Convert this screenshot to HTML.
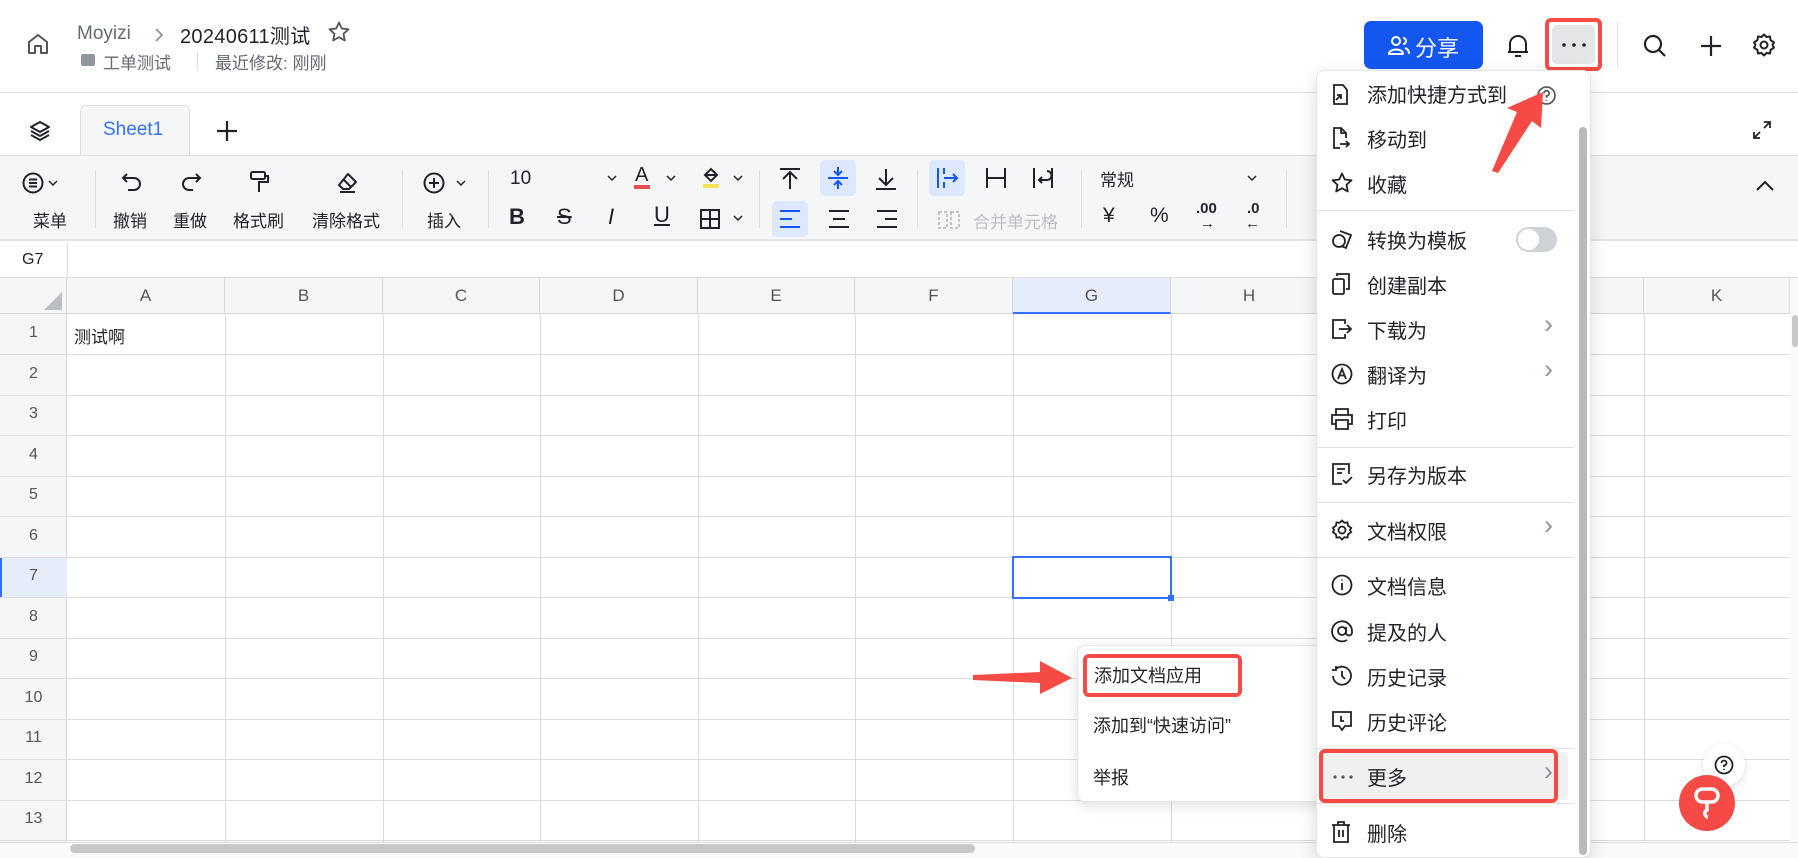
<!DOCTYPE html>
<html><head><meta charset="utf-8"><style>
*{margin:0;padding:0;box-sizing:border-box}
body{width:1798px;height:858px;overflow:hidden;background:#fff;font-family:"Liberation Sans","Noto Sans CJK SC",sans-serif;color:#1f2329;position:relative}
.a{position:absolute}
.t{position:absolute;white-space:nowrap}
svg{position:absolute;overflow:visible}
.lbl{font-size:17px;color:#1f2329}
.vl{position:absolute;top:314px;width:1px;height:530px;background:#dcdcdc}
.hl{position:absolute;left:0;width:1798px;height:1px;background:#dcdcdc}
.ch{position:absolute;top:278px;height:36px;line-height:36px;text-align:center;font-size:17px;color:#555;border-right:1px solid #d6d6d6}
.rh{position:absolute;left:0;width:67px;text-align:center;font-size:16px;color:#555}
.mi{position:absolute;left:1367px;font-size:20px;color:#1f2329;white-space:nowrap;margin-top:-2px}
.md{position:absolute;left:1316px;width:258px;height:1px;background:#dee0e3}
.chev{position:absolute;left:1544px;font-size:27px;color:#8f959e;margin-top:-5px}
.ic{left:1331px}
</style></head><body>

<!-- header -->
<svg style="left:26px;top:32px" width="24" height="24" viewBox="0 0 24 24" fill="none" stroke="#555" stroke-width="2"><path d="M3 10 L12 3 L21 10 V21 H15 V14 H9 V21 H3 Z" stroke-linejoin="round"/></svg>
<div class="t" style="left:77px;top:23px;font-size:19px;color:#646a73">Moyizi</div>
<svg style="left:154px;top:27px" width="10" height="16" viewBox="0 0 10 16" fill="none" stroke="#8f959e" stroke-width="1.8"><path d="M2 2 L8 8 L2 14"/></svg>
<div class="t" style="left:180px;top:20px;font-size:20px;color:#1f2329;letter-spacing:0.3px">20240611测试</div>
<svg style="left:328px;top:21px" width="22" height="22" viewBox="0 0 22 22" fill="none" stroke="#555" stroke-width="1.8" stroke-linejoin="round"><path d="M11 1.5 L13.8 7.5 L20.5 8.3 L15.5 12.8 L16.8 19.5 L11 16.2 L5.2 19.5 L6.5 12.8 L1.5 8.3 L8.2 7.5 Z"/></svg>
<div class="a" style="left:81px;top:54px;width:14px;height:12px;background:#8f959e;border-radius:2px"></div>
<div class="t" style="left:103px;top:49px;font-size:17px;color:#646a73">工单测试</div>
<div class="a" style="left:197px;top:52px;width:1px;height:18px;background:#dee0e3"></div>
<div class="t" style="left:215px;top:49px;font-size:17px;color:#646a73">最近修改: 刚刚</div>

<div class="a" style="left:1364px;top:21px;width:119px;height:48px;background:#1456f0;border-radius:7px"></div>
<svg style="left:1388px;top:35px" width="22" height="20" viewBox="0 0 22 20" fill="none" stroke="#fff" stroke-width="2"><circle cx="8" cy="6" r="4"/><path d="M1 19 C1 13 15 13 15 19 Z"/><path d="M15 3 A3 3 0 0 1 15 9 M17 13 C20 14 21 16 21 19"/></svg>
<div class="t" style="left:1415px;top:31px;font-size:22px;color:#fff">分享</div>
<svg style="left:1506px;top:33px" width="24" height="26" viewBox="0 0 24 26" fill="none" stroke="#1f2329" stroke-width="2"><path d="M4 19 V11 A8 8 0 0 1 20 11 V19 Z M2 19 H22 M9 23 H15" stroke-linejoin="round"/></svg>
<div class="a" style="left:1545px;top:18px;width:57px;height:53px;border:4px solid #f54a45;border-radius:6px"></div>
<div class="a" style="left:1552px;top:25px;width:43px;height:39px;background:#e4e5e7;border-radius:5px"></div>
<svg style="left:1562px;top:43px" width="24" height="4" viewBox="0 0 24 4" fill="#1f2329"><circle cx="2" cy="2" r="1.8"/><circle cx="12" cy="2" r="1.8"/><circle cx="22" cy="2" r="1.8"/></svg>
<div class="a" style="left:1617px;top:22px;width:1px;height:46px;background:#dee0e3"></div>
<svg style="left:1643px;top:34px" width="24" height="24" viewBox="0 0 24 24" fill="none" stroke="#1f2329" stroke-width="2.2"><circle cx="10" cy="10" r="8"/><path d="M16 16 L22 22"/></svg>
<svg style="left:1699px;top:34px" width="24" height="24" viewBox="0 0 24 24" fill="none" stroke="#1f2329" stroke-width="2.2"><path d="M12 2 V22 M2 12 H22"/></svg>
<svg style="left:1752px;top:33px" width="24" height="24" viewBox="0 0 24 24" fill="none" stroke="#1f2329" stroke-width="2"><circle cx="12" cy="12" r="3.5"/><path d="M12 1.5 L14.5 4 L18 3.5 L18.5 7 L22 9.5 L20.5 12 L22 14.5 L18.5 17 L18 20.5 L14.5 20 L12 22.5 L9.5 20 L6 20.5 L5.5 17 L2 14.5 L3.5 12 L2 9.5 L5.5 7 L6 3.5 L9.5 4 Z" stroke-linejoin="round"/></svg>

<div class="a" style="left:0;top:92px;width:1798px;height:1px;background:#dee0e3"></div>

<!-- tabs -->
<svg style="left:28px;top:119px" width="24" height="24" viewBox="0 0 24 24" fill="none" stroke="#1f2329" stroke-width="2" stroke-linejoin="round"><path d="M12 3 L21 8 L12 13 L3 8 Z M3 12 L12 17 L21 12 M3 16 L12 21 L21 16"/></svg>
<div class="a" style="left:80px;top:105px;width:110px;height:51px;background:#f5f6f7;border:1px solid #dee0e3;border-bottom:none;border-radius:6px 6px 0 0"></div>
<div class="t" style="left:103px;top:119px;font-size:19px;color:#3370ff">Sheet1</div>
<svg style="left:216px;top:120px" width="22" height="22" viewBox="0 0 22 22" fill="none" stroke="#1f2329" stroke-width="2.2"><path d="M11 1 V21 M1 11 H21"/></svg>
<svg style="left:1752px;top:120px" width="20" height="20" viewBox="0 0 20 20" fill="none" stroke="#1f2329" stroke-width="1.8"><path d="M12 2 H18 V8 M18 2 L12 8 M8 18 H2 V12 M2 18 L8 12"/></svg>

<!-- toolbar -->
<div class="a" style="left:0;top:155px;width:1798px;height:86px;background:#f5f6f7;border-top:1px solid #dee0e3;border-bottom:2px solid #e4e5e7"></div>
<svg style="left:22px;top:172px" width="22" height="22" viewBox="0 0 22 22" fill="none" stroke="#1f2329" stroke-width="2"><circle cx="11" cy="11" r="9.5"/><path d="M7 7.5 H15 M7 11 H15 M7 14.5 H15"/></svg>
<svg style="left:48px;top:180px" width="10" height="6" viewBox="0 0 10 6" fill="none" stroke="#1f2329" stroke-width="1.5"><path d="M1 1 L5 5 L9 1"/></svg>
<div class="t lbl" style="left:33px;top:207px">菜单</div>
<div class="a" style="left:95px;top:170px;width:1px;height:58px;background:#dee0e3"></div>
<svg style="left:121px;top:172px" width="22" height="22" viewBox="0 0 22 22" fill="none" stroke="#1f2329" stroke-width="2"><path d="M6 2 L2 6 L6 10 M2 6 H13 A6 6 0 0 1 13 18 H7"/></svg>
<div class="t lbl" style="left:113px;top:207px">撤销</div>
<svg style="left:180px;top:172px" width="22" height="22" viewBox="0 0 22 22" fill="none" stroke="#1f2329" stroke-width="2"><path d="M16 2 L20 6 L16 10 M20 6 H9 A6 6 0 0 0 9 18 H13"/></svg>
<div class="t lbl" style="left:173px;top:207px">重做</div>
<svg style="left:249px;top:170px" width="22" height="24" viewBox="0 0 22 24" fill="none" stroke="#1f2329" stroke-width="2"><rect x="2" y="2" width="14" height="7" rx="1.5"/><path d="M16 6 H19 V12 H10 V22"/></svg>
<div class="t lbl" style="left:233px;top:207px">格式刷</div>
<svg style="left:336px;top:172px" width="22" height="22" viewBox="0 0 22 22" fill="none" stroke="#1f2329" stroke-width="2" stroke-linejoin="round"><path d="M12 2 L20 10 L13 17 H7 L3 13 Z M7 7 L15 15 M4 20 H19"/></svg>
<div class="t lbl" style="left:312px;top:207px">清除格式</div>
<div class="a" style="left:402px;top:170px;width:1px;height:58px;background:#dee0e3"></div>
<svg style="left:423px;top:172px" width="22" height="22" viewBox="0 0 22 22" fill="none" stroke="#1f2329" stroke-width="2"><circle cx="11" cy="11" r="9.5"/><path d="M11 6 V16 M6 11 H16"/></svg>
<svg style="left:456px;top:180px" width="10" height="6" viewBox="0 0 10 6" fill="none" stroke="#1f2329" stroke-width="1.5"><path d="M1 1 L5 5 L9 1"/></svg>
<div class="t lbl" style="left:427px;top:207px">插入</div>
<div class="a" style="left:488px;top:170px;width:1px;height:58px;background:#dee0e3"></div>
<div class="t" style="left:510px;top:168px;font-size:19px">10</div>
<svg style="left:607px;top:175px" width="10" height="6" viewBox="0 0 10 6" fill="none" stroke="#1f2329" stroke-width="1.5"><path d="M1 1 L5 5 L9 1"/></svg>
<div class="t" style="left:635px;top:164px;font-size:20px">A</div>
<div class="a" style="left:634px;top:185px;width:16px;height:4px;background:#e34d4d"></div>
<svg style="left:666px;top:175px" width="10" height="6" viewBox="0 0 10 6" fill="none" stroke="#1f2329" stroke-width="1.5"><path d="M1 1 L5 5 L9 1"/></svg>
<svg style="left:701px;top:166px" width="20" height="24" viewBox="0 0 20 24" fill="none" stroke="#1f2329" stroke-width="2"><path d="M4 9 L10 3 L16 9 L10 15 Z M4 9 H16"/><rect x="2" y="18" width="16" height="4" fill="#f5e355" stroke="none"/></svg>
<svg style="left:733px;top:175px" width="10" height="6" viewBox="0 0 10 6" fill="none" stroke="#1f2329" stroke-width="1.5"><path d="M1 1 L5 5 L9 1"/></svg>
<div class="t" style="left:509px;top:204px;font-size:22px;font-weight:bold">B</div>
<div class="t" style="left:557px;top:204px;font-size:22px;text-decoration:line-through">S</div>
<div class="t" style="left:608px;top:204px;font-size:22px;font-style:italic">I</div>
<div class="t" style="left:654px;top:202px;font-size:22px;text-decoration:underline">U</div>
<svg style="left:700px;top:209px" width="20" height="20" viewBox="0 0 20 20" fill="none" stroke="#1f2329" stroke-width="2"><rect x="1" y="1" width="18" height="18"/><path d="M10 1 V19 M1 10 H19"/></svg>
<svg style="left:733px;top:215px" width="10" height="6" viewBox="0 0 10 6" fill="none" stroke="#1f2329" stroke-width="1.5"><path d="M1 1 L5 5 L9 1"/></svg>
<div class="a" style="left:759px;top:170px;width:1px;height:58px;background:#dee0e3"></div>
<svg style="left:779px;top:167px" width="22" height="24" viewBox="0 0 22 24" fill="none" stroke="#1f2329" stroke-width="2"><path d="M1 2 H21 M11 6 V22 M4 12 L11 5 L18 12"/></svg>
<div class="a" style="left:820px;top:160px;width:36px;height:36px;background:#dde7fd;border-radius:5px"></div>
<svg style="left:827px;top:166px" width="22" height="24" viewBox="0 0 22 24" fill="none" stroke="#1456f0" stroke-width="2"><path d="M1 12 H21 M11 1 V9 M7 5 L11 9 L15 5 M11 23 V15 M7 19 L11 15 L15 19"/></svg>
<svg style="left:875px;top:167px" width="22" height="24" viewBox="0 0 22 24" fill="none" stroke="#1f2329" stroke-width="2"><path d="M1 22 H21 M11 2 V18 M4 11 L11 18 L18 11"/></svg>
<div class="a" style="left:772px;top:201px;width:36px;height:36px;background:#dde7fd;border-radius:5px"></div>
<svg style="left:779px;top:210px" width="22" height="18" viewBox="0 0 22 18" fill="none" stroke="#1456f0" stroke-width="2"><path d="M1 1 H21 M1 9 H13 M1 17 H21"/></svg>
<svg style="left:828px;top:210px" width="22" height="18" viewBox="0 0 22 18" fill="none" stroke="#1f2329" stroke-width="2"><path d="M1 1 H21 M5 9 H17 M1 17 H21"/></svg>
<svg style="left:876px;top:210px" width="22" height="18" viewBox="0 0 22 18" fill="none" stroke="#1f2329" stroke-width="2"><path d="M1 1 H21 M9 9 H21 M1 17 H21"/></svg>
<div class="a" style="left:917px;top:170px;width:1px;height:58px;background:#dee0e3"></div>
<div class="a" style="left:929px;top:160px;width:36px;height:36px;background:#dde7fd;border-radius:5px"></div>
<svg style="left:936px;top:167px" width="22" height="22" viewBox="0 0 22 22" fill="none" stroke="#1456f0" stroke-width="2"><path d="M2 1 V21 M8 1 V7 M8 15 V21 M8 11 H21 M17 7 L21 11 L17 15"/></svg>
<svg style="left:985px;top:167px" width="22" height="22" viewBox="0 0 22 22" fill="none" stroke="#1f2329" stroke-width="2"><path d="M2 1 V21 M20 1 V21 M2 11 H20"/></svg>
<svg style="left:1032px;top:167px" width="22" height="22" viewBox="0 0 22 22" fill="none" stroke="#1f2329" stroke-width="2"><path d="M2 1 V21 M20 1 V21 M15 4 A4 4 0 0 1 15 13 H7 M10 10 L7 13 L10 16"/></svg>
<svg style="left:938px;top:211px" width="22" height="18" viewBox="0 0 22 18" fill="none" stroke="#c0c3c8" stroke-width="2" stroke-dasharray="3 2"><rect x="1" y="1" width="8" height="16"/><rect x="13" y="1" width="8" height="16"/></svg>
<div class="t" style="left:973px;top:208px;font-size:17px;color:#bbbfc4">合并单元格</div>
<div class="a" style="left:1081px;top:170px;width:1px;height:58px;background:#dee0e3"></div>
<div class="t" style="left:1100px;top:166px;font-size:17px">常规</div>
<svg style="left:1247px;top:175px" width="10" height="6" viewBox="0 0 10 6" fill="none" stroke="#1f2329" stroke-width="1.5"><path d="M1 1 L5 5 L9 1"/></svg>
<div class="t" style="left:1103px;top:204px;font-size:21px">¥</div>
<div class="t" style="left:1150px;top:204px;font-size:21px">%</div>
<div class="t" style="left:1196px;top:200px;font-size:15px;font-weight:bold">.00</div>
<div class="t" style="left:1200px;top:215px;font-size:15px">→</div>
<div class="t" style="left:1247px;top:200px;font-size:15px;font-weight:bold">.0</div>
<div class="t" style="left:1245px;top:215px;font-size:15px">←</div>
<div class="a" style="left:1286px;top:170px;width:1px;height:58px;background:#dee0e3"></div>
<svg style="left:1755px;top:180px" width="20" height="12" viewBox="0 0 20 12" fill="none" stroke="#1f2329" stroke-width="2"><path d="M2 10 L10 2 L18 10"/></svg>

<!-- formula bar -->
<div class="t" style="left:22px;top:251px;font-size:16px;color:#1f2329">G7</div>
<div class="a" style="left:67px;top:242px;width:1px;height:36px;background:#dee0e3"></div>
<div class="a" style="left:0;top:277px;width:1798px;height:1px;background:#dcdcdc"></div>

<!-- column headers -->
<div class="a" style="left:0;top:278px;width:1798px;height:36px;background:#f5f6f7;border-bottom:1px solid #d6d6d6"></div>
<div class="a" style="left:44px;top:292px;width:0;height:0;border-left:18px solid transparent;border-bottom:18px solid #bbbfc4"></div>
<div class="a" style="left:66px;top:278px;width:1px;height:36px;background:#d6d6d6"></div>
<div class="ch" style="left:67px;width:158px">A</div>
<div class="ch" style="left:225px;width:158px">B</div>
<div class="ch" style="left:383px;width:157px">C</div>
<div class="ch" style="left:540px;width:158px">D</div>
<div class="ch" style="left:698px;width:157px">E</div>
<div class="ch" style="left:855px;width:158px">F</div>
<div class="ch" style="left:1013px;width:158px;background:#e6ecfa;border-bottom:2px solid #3370ff;height:36px">G</div>
<div class="ch" style="left:1171px;width:157px">H</div>
<div class="ch" style="left:1328px;width:158px">I</div>
<div class="ch" style="left:1486px;width:158px">J</div>
<div class="ch" style="left:1644px;width:146px">K</div>

<!-- row headers -->
<div class="a" style="left:0;top:314px;width:67px;height:530px;background:#f5f6f7;border-right:1px solid #d6d6d6"></div>
<div class="a" style="left:0;top:557px;width:67px;height:41px;background:#e6ecfa;border-left:2px solid #3370ff"></div>
<div class="rh" style="top:324px">1</div><div class="rh" style="top:365px">2</div><div class="rh" style="top:405px">3</div><div class="rh" style="top:446px">4</div><div class="rh" style="top:486px">5</div><div class="rh" style="top:527px">6</div><div class="rh" style="top:567px">7</div><div class="rh" style="top:608px">8</div><div class="rh" style="top:648px">9</div><div class="rh" style="top:689px">10</div><div class="rh" style="top:729px">11</div><div class="rh" style="top:770px">12</div><div class="rh" style="top:810px">13</div>

<!-- grid -->
<div class="vl" style="left:225px"></div><div class="vl" style="left:383px"></div><div class="vl" style="left:540px"></div><div class="vl" style="left:698px"></div><div class="vl" style="left:855px"></div><div class="vl" style="left:1013px"></div><div class="vl" style="left:1171px"></div><div class="vl" style="left:1328px"></div><div class="vl" style="left:1486px"></div><div class="vl" style="left:1644px"></div>
<div class="hl" style="top:354px"></div><div class="hl" style="top:395px"></div><div class="hl" style="top:435px"></div><div class="hl" style="top:476px"></div><div class="hl" style="top:516px"></div><div class="hl" style="top:557px"></div><div class="hl" style="top:597px"></div><div class="hl" style="top:638px"></div><div class="hl" style="top:678px"></div><div class="hl" style="top:719px"></div><div class="hl" style="top:759px"></div><div class="hl" style="top:800px"></div><div class="hl" style="top:840px"></div>
<div class="t" style="left:74px;top:323px;font-size:17px;color:#1f2329">测试啊</div>
<div class="a" style="left:1012px;top:556px;width:160px;height:43px;border:2.5px solid #3370ff"></div>
<div class="a" style="left:1168px;top:595px;width:6px;height:6px;background:#3370ff"></div>

<!-- scrollbars -->
<div class="a" style="left:0;top:842px;width:1798px;height:16px;background:#fafafa;border-top:1px solid #dcdcdc"></div>
<div class="a" style="left:70px;top:844px;width:905px;height:9px;background:#c8c8c8;border-radius:5px"></div>
<div class="a" style="left:1790px;top:278px;width:8px;height:564px;background:#fafafa"></div>
<div class="a" style="left:1792px;top:315px;width:6px;height:32px;background:#c8c8c8;border-radius:3px"></div>

<!-- submenu -->
<div class="a" style="left:1077px;top:645px;width:260px;height:157px;background:#fff;border:1px solid #e4e5e7;border-radius:8px;box-shadow:0 4px 14px rgba(0,0,0,.12)"></div>
<div class="t" style="left:1094px;top:662px;font-size:18px">添加文档应用</div>
<div class="a" style="left:1083px;top:654px;width:159px;height:43px;border:4px solid #f54a45;border-radius:6px"></div>
<div class="t" style="left:1093px;top:712px;font-size:18px">添加到“快速访问”</div>
<div class="t" style="left:1093px;top:764px;font-size:18px">举报</div>

<!-- main menu -->
<div class="a" style="left:1316px;top:70px;width:275px;height:788px;background:#fff;border:1px solid #e4e5e7;border-radius:8px;box-shadow:0 6px 18px rgba(0,0,0,.14)"></div>
<div class="a" style="left:1579px;top:127px;width:8px;height:728px;background:#b8b9bb;border-radius:4px"></div>
<svg class="ic" style="top:84px" width="20" height="22" viewBox="0 0 20 22" fill="none" stroke="#1f2329" stroke-width="1.8"><path d="M3 6 V20 H16 V6 L12 1 H5 M3 8 V1 H12 M5 16 L10 11 M6 11 H10 V15"/></svg>
<div class="mi" style="top:81px">添加快捷方式到</div>
<svg style="left:1537px;top:86px" width="19" height="19" viewBox="0 0 18 18" fill="none" stroke="#555" stroke-width="1.6"><circle cx="9" cy="9" r="8"/><path d="M6.5 7 A2.5 2.5 0 1 1 9 9.5 V11 M9 13 V14"/></svg>
<svg class="ic" style="top:127px" width="20" height="22" viewBox="0 0 20 22" fill="none" stroke="#1f2329" stroke-width="1.8"><path d="M15 11 V6 L10 1 H3 V21 H9 M10 1 V6 H15 M9 17 H18 M15 14 L18 17 L15 20"/></svg>
<div class="mi" style="top:126px">移动到</div>
<svg class="ic" style="top:172px" width="22" height="22" viewBox="0 0 22 22" fill="none" stroke="#1f2329" stroke-width="1.8" stroke-linejoin="round"><path d="M11 1.5 L13.8 7.5 L20.5 8.3 L15.5 12.8 L16.8 19.5 L11 16.2 L5.2 19.5 L6.5 12.8 L1.5 8.3 L8.2 7.5 Z"/></svg>
<div class="mi" style="top:171px">收藏</div>
<div class="md" style="top:210px"></div>
<svg class="ic" style="top:228px" width="22" height="22" viewBox="0 0 22 22" fill="none" stroke="#1f2329" stroke-width="1.8"><circle cx="8" cy="13" r="6"/><path d="M9 3 L20 7 L15 20 L10 18"/></svg>
<div class="mi" style="top:227px">转换为模板</div>
<div class="a" style="left:1516px;top:227px;width:41px;height:25px;background:#d0d3d6;border-radius:13px"></div>
<div class="a" style="left:1518px;top:229px;width:21px;height:21px;background:#fff;border-radius:50%"></div>
<svg class="ic" style="top:273px" width="20" height="22" viewBox="0 0 20 22" fill="none" stroke="#1f2329" stroke-width="1.8"><rect x="2" y="6" width="11" height="15" rx="1.5"/><path d="M6 3 V1 H18 V16 H15"/></svg>
<div class="mi" style="top:272px">创建副本</div>
<svg class="ic" style="top:318px" width="22" height="22" viewBox="0 0 22 22" fill="none" stroke="#1f2329" stroke-width="1.8"><path d="M14 6 V2 H2 V20 H14 V16 M8 11 H20 M16 7 L20 11 L16 15"/></svg>
<div class="mi" style="top:317px">下载为</div><div class="chev" style="top:314px">›</div>
<svg class="ic" style="top:363px" width="22" height="22" viewBox="0 0 22 22" fill="none" stroke="#1f2329" stroke-width="1.8"><circle cx="11" cy="11" r="9.5"/><path d="M7 16 L11 6 L15 16 M8.5 12.5 H13.5"/></svg>
<div class="mi" style="top:362px">翻译为</div><div class="chev" style="top:359px">›</div>
<svg class="ic" style="top:408px" width="22" height="22" viewBox="0 0 22 22" fill="none" stroke="#1f2329" stroke-width="1.8"><path d="M5 7 V1 H17 V7 M5 16 H1 V7 H21 V16 H17 M5 12 H17 V21 H5 Z"/></svg>
<div class="mi" style="top:407px">打印</div>
<div class="md" style="top:447px"></div>
<svg class="ic" style="top:463px" width="22" height="22" viewBox="0 0 22 22" fill="none" stroke="#1f2329" stroke-width="1.8"><path d="M11 21 H2 V1 H18 V11 M6 6 H14 M6 10 H11 M12 17 L15 20 L21 14"/></svg>
<div class="mi" style="top:462px">另存为版本</div>
<div class="md" style="top:502px"></div>
<svg class="ic" style="top:519px" width="22" height="22" viewBox="0 0 22 22" fill="none" stroke="#1f2329" stroke-width="1.8"><circle cx="11" cy="11" r="3.5"/><path d="M11 1.5 L13.3 3.8 L16.5 3.4 L17 6.6 L20.2 9 L18.8 11 L20.2 13 L17 15.4 L16.5 18.6 L13.3 18.2 L11 20.5 L8.7 18.2 L5.5 18.6 L5 15.4 L1.8 13 L3.2 11 L1.8 9 L5 6.6 L5.5 3.4 L8.7 3.8 Z"/></svg>
<div class="mi" style="top:518px">文档权限</div><div class="chev" style="top:515px">›</div>
<div class="md" style="top:557px"></div>
<svg class="ic" style="top:574px" width="22" height="22" viewBox="0 0 22 22" fill="none" stroke="#1f2329" stroke-width="1.8"><circle cx="11" cy="11" r="9.5"/><path d="M11 9 V16 M11 5.5 V6.5"/></svg>
<div class="mi" style="top:573px">文档信息</div>
<svg class="ic" style="top:620px" width="22" height="22" viewBox="0 0 22 22" fill="none" stroke="#1f2329" stroke-width="1.8"><circle cx="11" cy="11" r="4"/><path d="M15 7 V13 A3 3 0 0 0 21 12 A10 10 0 1 0 16 20"/></svg>
<div class="mi" style="top:619px">提及的人</div>
<svg class="ic" style="top:665px" width="22" height="22" viewBox="0 0 22 22" fill="none" stroke="#1f2329" stroke-width="1.8"><path d="M2 11 A9 9 0 1 0 5 4 M5 1 V5 H1 M11 6 V11 L14 14"/></svg>
<div class="mi" style="top:664px">历史记录</div>
<svg class="ic" style="top:710px" width="22" height="22" viewBox="0 0 22 22" fill="none" stroke="#1f2329" stroke-width="1.8"><path d="M2 2 H20 V16 H14 L11 20 L8 16 H2 Z M10 6 V11 H13"/></svg>
<div class="mi" style="top:709px">历史评论</div>
<div class="md" style="top:748px"></div>
<div class="a" style="left:1321px;top:752px;width:247px;height:48px;background:#eff0f1;border-radius:6px"></div>
<svg style="left:1333px;top:775px" width="20" height="4" viewBox="0 0 20 4" fill="#555"><circle cx="2" cy="2" r="1.6"/><circle cx="10" cy="2" r="1.6"/><circle cx="18" cy="2" r="1.6"/></svg>
<div class="mi" style="top:764px">更多</div><div class="chev" style="top:761px">›</div>
<div class="a" style="left:1319px;top:749px;width:239px;height:54px;border:4px solid #f54a45;border-radius:6px"></div>
<div class="md" style="top:803px"></div>
<svg class="ic" style="top:821px" width="20" height="22" viewBox="0 0 20 22" fill="none" stroke="#1f2329" stroke-width="1.8"><path d="M1 4 H19 M7 4 V1 H13 V4 M3 4 V21 H17 V4 M8 9 V16 M12 9 V16"/></svg>
<div class="mi" style="top:820px">删除</div>

<!-- floating buttons -->
<div class="a" style="left:1703px;top:744px;width:42px;height:42px;background:#fff;border-radius:50%;box-shadow:0 2px 8px rgba(0,0,0,.12)"></div>
<svg style="left:1714px;top:755px" width="20" height="20" viewBox="0 0 20 20" fill="none" stroke="#1f2329" stroke-width="1.8"><circle cx="10" cy="10" r="8.5"/><path d="M7.5 8 A2.5 2.5 0 1 1 10 10.5 V12 M10 14 V15"/></svg>
<div class="a" style="left:1679px;top:775px;width:56px;height:56px;background:#f54a45;border-radius:50%"></div>
<svg style="left:1693px;top:786px" width="28" height="34" viewBox="0 0 28 34" fill="none" stroke="#fff" stroke-width="3.5"><rect x="3" y="3" width="22" height="13" rx="6.5"/><path d="M14 17 V24 C10 26 12 31 15 31"/></svg>

<!-- annotation arrows -->
<svg style="left:0;top:0" width="1798" height="858" viewBox="0 0 1798 858"><polygon points="973,675 1040,672 1040,661 1072,678 1040,694 1040,683 973,680" fill="#f54a45"/><polygon points="1492,171 1517,112 1507,108 1543,92 1541,128 1532,121 1498,173" fill="#f54a45"/></svg>
</body></html>
